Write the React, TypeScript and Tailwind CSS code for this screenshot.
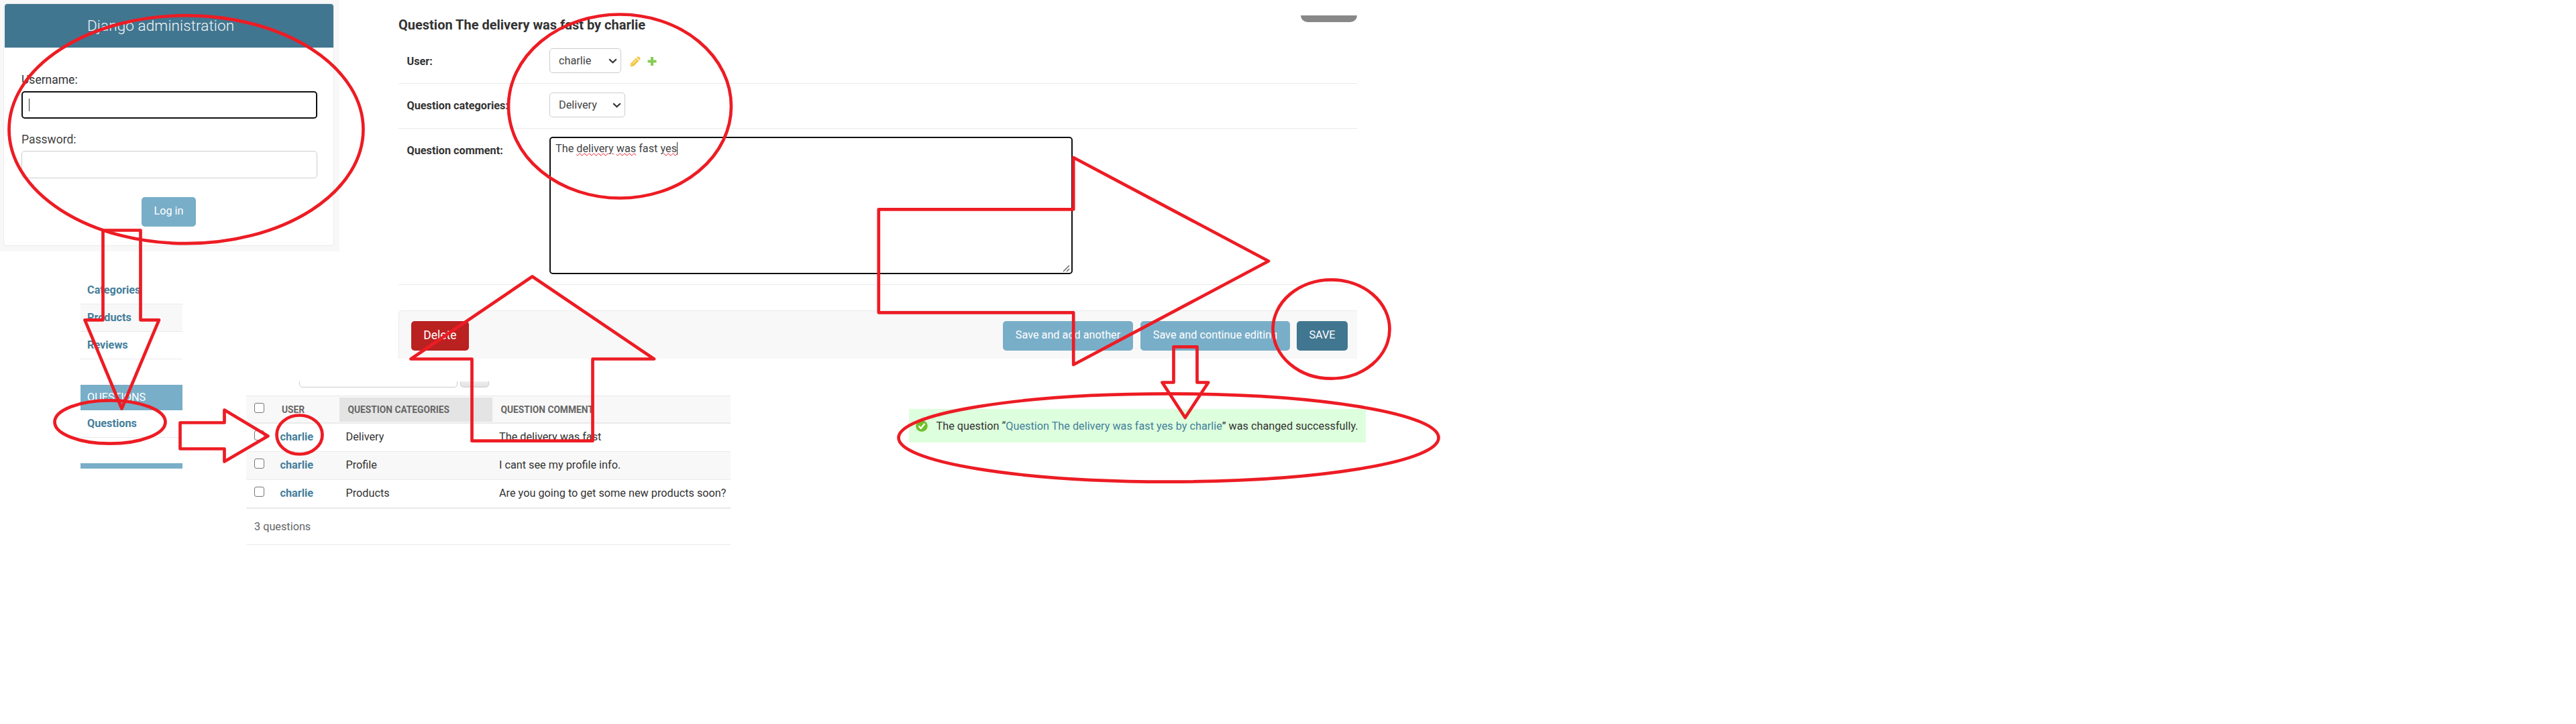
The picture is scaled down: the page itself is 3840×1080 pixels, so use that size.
import type { ReactNode } from "react";

const models = ["Categories", "Products", "Reviews"];

const rows = [
  { category: "Delivery", comment: "The delivery was fast", tone: "border-b" },
  { category: "Profile", comment: "I cant see my profile info.", tone: "border-b bg-[#f8f8f8]" },
  { category: "Products", comment: "Are you going to get some new products soon?", tone: "border-b" },
];

function Login() {
  return (
    <section className="h-[375px] w-[506px] bg-[#f8f8f8] pt-[5px] pl-[5px]">
      <div className="flex h-[362px] w-[493px] flex-col rounded-[5px] border border-[#eaeaea] bg-white">
        <header className="ml-px h-[65px] rounded-t-[4px] bg-[#417690] pl-[123px] text-[22.5px] leading-[64px] font-light tracking-[0.1px] text-[#f5f5f5]">
          Django administration
        </header>
        <div className="flex flex-col pt-[37px] pr-[24px] pl-[26px]">
          <label className="h-[28px] text-[17.5px] leading-[22px] text-[#333]">Username:</label>
          <div className="flex h-[41px] items-center rounded-[5px] border-2 border-[#101010] pl-[9px]">
            <span className="h-[19px] w-px bg-[#333]" />
          </div>
          <label className="mt-[20px] h-[28px] text-[17.5px] leading-[23px] text-[#444]">Password:</label>
          <div className="h-[41px] rounded-[5px] border border-[#ccc]" />
          <button className="mt-[28px] ml-[179px] h-[44px] w-[81px] rounded-[5px] bg-[#79aec8] pb-[2px] text-[16.25px] leading-[42px] text-white">
            Log in
          </button>
        </div>
      </div>
    </section>
  );
}

function AppList() {
  return (
    <nav className="mt-[38px] ml-[120px] flex w-[152px] flex-col text-[16.25px] font-bold text-[#447e9b]">
      {models.map((m) => (
        <div key={m} className="h-[41px] border-b border-[#eaeaea] pl-[10px] leading-[39px] even:bg-[#f8f8f8]">
          {m}
        </div>
      ))}
      <div className="mt-[38px] h-[38px] bg-[#79aec8] pl-[10px] leading-[37px] font-normal text-white">QUESTIONS</div>
      <div className="h-[41px] border-b border-[#eaeaea] pl-[10px] leading-[39px]">Questions</div>
      <div className="mt-[38px] h-[8px] bg-[#79aec8]" />
    </nav>
  );
}

function Select({ value, className }: { value: string; className: string }) {
  return (
    <div className={`flex h-[37px] items-center justify-between rounded-[5px] border border-[#ccc] pr-[5px] pb-px pl-[13px] text-[16.25px] text-[#444] ${className}`}>
      <span>{value}</span>
      <svg width="13" height="8" viewBox="0 0 13 8" fill="none" stroke="#333" strokeWidth="2.2" className="mt-px">
        <path d="M1.2 1.2 6.5 6.3 11.8 1.2" />
      </svg>
    </div>
  );
}

function Field({ label, className, children }: { label: string; className: string; children: ReactNode }) {
  return (
    <div className={`flex border-b border-[#eaeaea] ${className}`}>
      <label className="w-[225px] shrink-0 pl-[12.5px] text-[16.25px] font-bold text-[#333]">{label}</label>
      {children}
    </div>
  );
}

const typo = "underline decoration-[#e81123] decoration-wavy decoration-1 underline-offset-[1px]";

function ChangeForm() {
  return (
    <section className="ml-[227px] flex h-[535px] w-[1429px] flex-col">
      <div className="mt-[23px] ml-auto h-[10px] w-[84px] rounded-b-[13px] bg-[#888]" />
      <h2 className="-mt-[8px] text-[20px] leading-[24px] font-bold text-[#333]">Question The delivery was fast by charlie</h2>
      <Field label="User:" className="h-[76px] pt-[23px] leading-[39px]">
        <Select value="charlie" className="w-[107px]" />
        <svg className="mt-[12px] ml-[13px]" width="16" height="16" viewBox="0 0 16 16" fill="#f3c53c">
          <path d="M.6 15.400 1.300 10.500 9.200 2.600l4.200 4.200L5.500 14.700ZM10.200 1.700l.9-.9q1.200-1 2.500.1l1.400 1.400q1.100 1.200.1 2.500l-.9.900Z" />
          <path d="m4.300 10.800 5.600-5.600M2.200 13h1.400" stroke="#fff" strokeWidth="1.100" strokeOpacity=".75" />
        </svg>
        <svg className="mt-[12.500px] ml-[9.500px]" width="14" height="13" viewBox="0 0 14 13">
          <path d="M5 0h4v4.500h4.500v4H9V13H5V8.500H.5v-4H5Z" fill="#87cb56" />
        </svg>
      </Field>
      <Field label="Question categories:" className="h-[67px] pt-[13px] leading-[39px]">
        <Select value="Delivery" className="w-[113px]" />
      </Field>
      <Field label="Question comment:" className="h-[233px] pt-[12px] leading-[41px]">
        <div className="flex h-[205px] w-[780px] flex-col justify-between rounded-[5px] border-2 border-[#101010] pr-[2px] pb-px pl-[7px] text-[16.25px] leading-[19px] text-[#444]">
          <div className="flex items-center pt-[6px]">
            <p>
              The <span className={typo}>delivery</span> <span className={typo}>was</span> fast <span className={typo}>yes</span>
            </p>
            <span className="h-[19px] w-px bg-[#333]" />
          </div>
          <svg className="self-end" width="11" height="11" viewBox="0 0 11 11" stroke="#555" strokeWidth="1.2">
            <path d="M1 10 10 1M6 10l4-4" />
          </svg>
        </div>
      </Field>
      <div className="mt-[38px] flex h-[72px] items-start rounded-tl-[5px] border-t border-l border-[#eaeaea] bg-[#f8f8f8] pt-[15px] pr-[14px] pl-[18px] text-[16.25px] leading-[42px] text-white">
        <button className="mr-auto h-[44px] w-[86px] rounded-[5px] bg-[#ba2121] pb-[2px] text-[17.5px]">Delete</button>
        <button className="mr-[11px] h-[44px] w-[194px] rounded-[5px] bg-[#79aec8] pb-[2px]">Save and add another</button>
        <button className="mr-[10px] h-[44px] w-[223px] rounded-[5px] bg-[#79aec8] pb-[2px]">Save and continue editing</button>
        <button className="h-[44px] w-[76px] rounded-[5px] bg-[#417690] pb-[2px]">SAVE</button>
      </div>
    </section>
  );
}

function Checkbox() {
  return <span className="block size-[15px] rounded-[3px] border-[1.5px] border-[#767676] bg-white" />;
}

function QuestionTable() {
  return (
    <section className="flex w-[722px] flex-col text-[16.25px] text-[#333]">
      <div className="ml-[79px] flex h-[9px] gap-[4px]">
        <div className="w-[236px] rounded-b-[5px] border border-t-0 border-[#ccc]" />
        <div className="w-[43px] rounded-b-[5px] border border-t-0 border-[#ccc] bg-linear-to-b from-[#eee] to-[#e2e2e2]" />
      </div>
      <div className="mt-[12px] flex h-[42px] border-t border-b-2 border-[#eaeaea] bg-[#f8f8f8] text-[13.75px] leading-[40px] font-bold text-[#666]">
        <div className="w-[53px] pt-[10px] pl-[12px]">
          <Checkbox />
        </div>
        <div className="w-[86px]">USER</div>
        <div className="mt-[2px] mb-px w-[228px] bg-[#e4e4e4] pl-[12.5px] leading-[36px]">QUESTION CATEGORIES</div>
        <div className="pl-[12.5px]">QUESTION COMMENT</div>
      </div>
      {rows.map((r) => (
        <div key={r.category} className={`flex h-[42px] border-[#eaeaea] leading-[39px] ${r.tone}`}>
          <div className="w-[50.500px] pt-[10px] pl-[12px]">
            <Checkbox />
          </div>
          <div className="w-[98px] font-bold text-[#447e9b]">charlie</div>
          <div className="w-[228.500px]">{r.category}</div>
          <div className="whitespace-nowrap">{r.comment}</div>
        </div>
      ))}
      <div className="h-[55px] border-t border-b border-[#eaeaea] pl-[12px] leading-[54px] text-[#666]">3 questions</div>
    </section>
  );
}

function Message() {
  return (
    <section className="mt-[41px] ml-[266px] flex h-[50px] w-[681px] items-start bg-[#ddffdd] pl-[10px] text-[16.25px] leading-[51px] whitespace-nowrap text-[#333]">
      <svg className="mt-[17px] mr-[12.5px]" width="18" height="17" viewBox="0 0 18 17">
        <ellipse cx="9" cy="8.500" rx="8.800" ry="8.500" fill="#70bf2b" />
        <path d="m4.600 8.600 3.200 3.400 5.600-7" fill="none" stroke="#fff" strokeWidth="2.400" />
      </svg>
      <p>
        The question “<a className="text-[#447e9b]">Question The delivery was fast yes by charlie</a>” was changed successfully.
      </p>
    </section>
  );
}

function Annotations() {
  return (
    <svg className="pointer-events-none absolute inset-0" width="3840" height="1080" viewBox="0 0 3840 1080" fill="none" stroke="#ed1c24" strokeWidth="4.700" strokeLinejoin="round">
      <ellipse cx="277.500" cy="193.200" rx="264" ry="170" />
      <ellipse cx="164" cy="629.500" rx="82.500" ry="32.200" />
      <ellipse cx="446.500" cy="648.500" rx="34" ry="29" />
      <ellipse cx="924" cy="158.500" rx="166" ry="137" />
      <ellipse cx="1984.500" cy="491" rx="87" ry="73.700" />
      <ellipse cx="1742" cy="653" rx="402.500" ry="65.600" />
      <path d="M153.500 343.500H209.500V477.300H237L181.500 609.500 126.500 477.300H153.500Z" />
      <path d="M268.500 630.500H334.500V611.500L399.500 650.500 334.500 688.500V669.500H268.500Z" />
      <path d="M703.500 657.700V535.500H612.500L793.500 412.500 975 535.500H883.500V657.700Z" />
      <path d="M1309.800 312.300H1600.200V235L1891 389.500 1600.200 544V466.300H1309.800Z" />
      <path d="M1749.500 517.300H1784.500V570.500H1801.200L1766.700 623 1732.500 570.500H1749.500Z" />
    </svg>
  );
}

export default function App() {
  return (
    <main className="relative flex h-[1080px] w-[3840px] overflow-hidden bg-white font-[Roboto,sans-serif]">
      <div className="flex w-[367px] shrink-0 flex-col">
        <Login />
        <AppList />
      </div>
      <div className="flex flex-col">
        <ChangeForm />
        <div className="mt-[34px] flex items-start">
          <QuestionTable />
          <Message />
        </div>
      </div>
      <Annotations />
    </main>
  );
}
